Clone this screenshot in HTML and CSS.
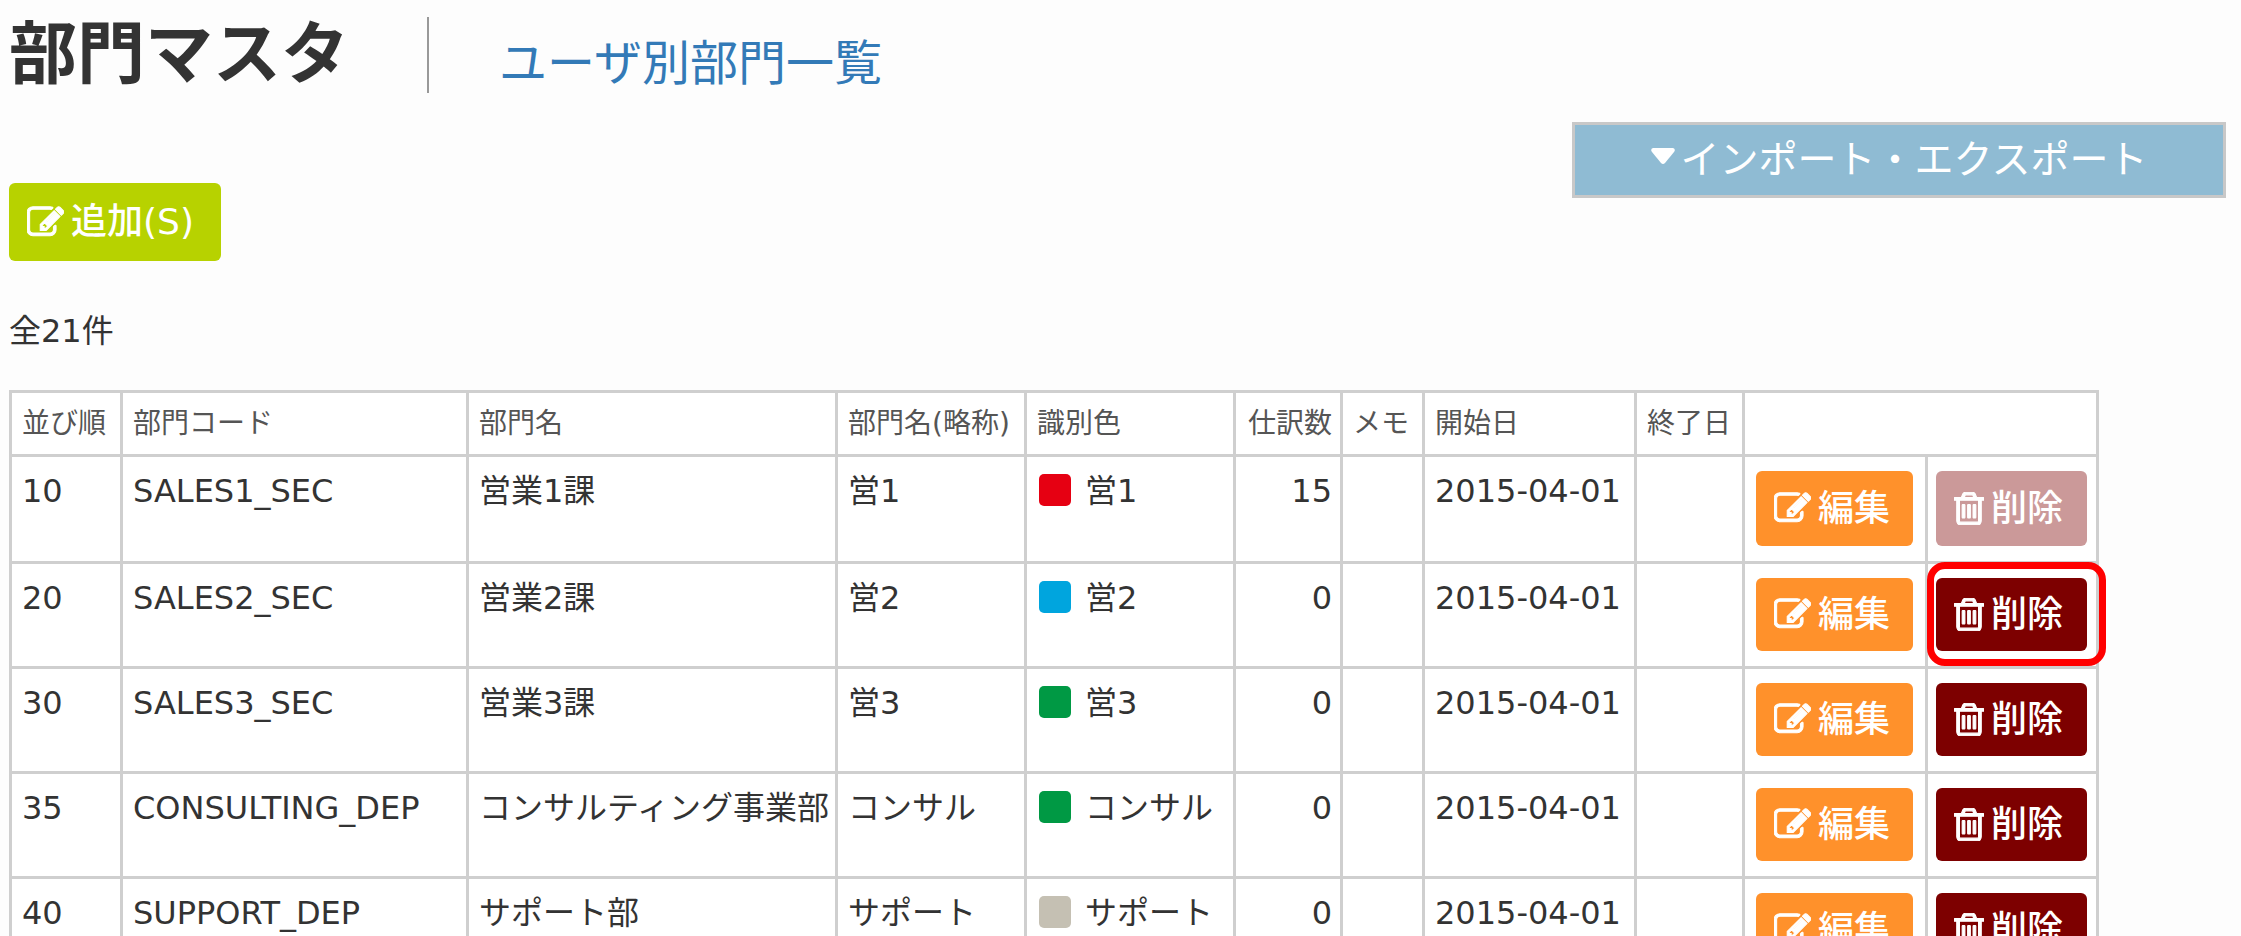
FILE: index.html
```html
<!DOCTYPE html>
<html lang="ja">
<head>
  <meta charset="utf-8">
  <title>部門マスタ</title>
  <link rel="stylesheet" href="styles.css">
</head>
<body>
  <svg class="defs" aria-hidden="true">
    <symbol id="icon-edit" viewBox="0 0 1792 1792">
      <path d="M888 1184l116-116-152-152-116 116v56h96v96h56zm440-720q-16-16-33 1l-350 350q-17 17-1 33t33-1l350-350q17-17 1-33zm80 594v190q0 119-84.5 203.5t-203.5 84.5h-832q-119 0-203.5-84.5t-84.5-203.5v-832q0-119 84.5-203.5t203.5-84.5h832q63 0 117 25 15 7 18 23 3 17-9 29l-49 49q-14 14-32 8-23-6-45-6h-832q-66 0-113 47t-47 113v832q0 66 47 113t113 47h832q66 0 113-47t47-113v-126q0-13 9-22l64-64q15-15 35-7t20 29zm-96-738l288 288-672 672h-288v-288zm444 132l-92 92-288-288 92-92q28-28 68-28t68 28l152 152q28 28 28 68t-28 68z"/>
    </symbol>
    <symbol id="icon-trash" viewBox="192 128 1408 1536">
      <path d="M704 736v576q0 14-9 23t-23 9h-64q-14 0-23-9t-9-23v-576q0-14 9-23t23-9h64q14 0 23 9t9 23zm256 0v576q0 14-9 23t-23 9h-64q-14 0-23-9t-9-23v-576q0-14 9-23t23-9h64q14 0 23 9t9 23zm256 0v576q0 14-9 23t-23 9h-64q-14 0-23-9t-9-23v-576q0-14 9-23t23-9h64q14 0 23 9t9 23zm128 724v-948h-896v948q0 22 7 40.5t14.5 27 10.5 8.5h832q3 0 10.5-8.5t14.5-27 7-40.5zm-672-1076h448l-48-117q-7-9-17-11h-317q-10 2-17 11zm928 32v64q0 14-9 23t-23 9h-96v948q0 83-47 143.5t-113 60.5h-832q-66 0-113-58.5t-47-141.5v-952h-96q-14 0-23-9t-9-23v-64q0-14 9-23t23-9h309l70-167q15-37 54-63t79-26h320q40 0 79 26t54 63l70 167h309q14 0 23 9t9 23z"/>
    </symbol>
  </svg>

  <header class="page-header">
    <h1>部門マスタ</h1>
    <a class="sub-link" href="#">ユーザ別部門一覧</a>
  </header>

  <div class="toolbar">
    <button type="button" class="btn btn-add"><svg class="icon-edit"><use href="#icon-edit"/></svg>追加(S)</button>
    <button type="button" class="import-toggle"><svg class="caret" viewBox="0 0 24 16"><path d="M2 0h20q3 1 1 4L14 15q-2 2-4 0L1 4Q-1 1 2 0z"/></svg>インポート・エクスポート</button>
  </div>

  <p class="count">全21件</p>

  <table class="master">
    <colgroup>
      <col class="col-order">
      <col class="col-code">
      <col class="col-name">
      <col class="col-short">
      <col class="col-color">
      <col class="col-num">
      <col class="col-memo">
      <col class="col-start">
      <col class="col-end">
      <col class="col-edit">
      <col class="col-delete">
    </colgroup>
    <thead>
      <tr>
        <th>並び順</th>
        <th>部門コード</th>
        <th>部門名</th>
        <th>部門名(略称)</th>
        <th>識別色</th>
        <th class="num">仕訳数</th>
        <th>メモ</th>
        <th>開始日</th>
        <th>終了日</th>
        <th colspan="2"></th>
      </tr>
    </thead>
    <tbody>
      <tr>
        <td>10</td>
        <td>SALES1_SEC</td>
        <td>営業1課</td>
        <td>営1</td>
        <td><span class="swatch red"></span>営1</td>
        <td class="num">15</td>
        <td></td>
        <td>2015-04-01</td>
        <td></td>
        <td class="action"><button type="button" class="btn btn-edit"><svg class="icon-edit"><use href="#icon-edit"/></svg>編集</button></td>
        <td class="action"><button type="button" class="btn btn-delete" disabled><svg class="icon-trash"><use href="#icon-trash"/></svg>削除</button></td>
      </tr>
      <tr>
        <td>20</td>
        <td>SALES2_SEC</td>
        <td>営業2課</td>
        <td>営2</td>
        <td><span class="swatch blue"></span>営2</td>
        <td class="num">0</td>
        <td></td>
        <td>2015-04-01</td>
        <td></td>
        <td class="action"><button type="button" class="btn btn-edit"><svg class="icon-edit"><use href="#icon-edit"/></svg>編集</button></td>
        <td class="action"><div class="marked"><button type="button" class="btn btn-delete"><svg class="icon-trash"><use href="#icon-trash"/></svg>削除</button></div></td>
      </tr>
      <tr>
        <td>30</td>
        <td>SALES3_SEC</td>
        <td>営業3課</td>
        <td>営3</td>
        <td><span class="swatch green"></span>営3</td>
        <td class="num">0</td>
        <td></td>
        <td>2015-04-01</td>
        <td></td>
        <td class="action"><button type="button" class="btn btn-edit"><svg class="icon-edit"><use href="#icon-edit"/></svg>編集</button></td>
        <td class="action"><button type="button" class="btn btn-delete"><svg class="icon-trash"><use href="#icon-trash"/></svg>削除</button></td>
      </tr>
      <tr>
        <td>35</td>
        <td>CONSULTING_DEP</td>
        <td>コンサルティング事業部</td>
        <td>コンサル</td>
        <td><span class="swatch green"></span>コンサル</td>
        <td class="num">0</td>
        <td></td>
        <td>2015-04-01</td>
        <td></td>
        <td class="action"><button type="button" class="btn btn-edit"><svg class="icon-edit"><use href="#icon-edit"/></svg>編集</button></td>
        <td class="action"><button type="button" class="btn btn-delete"><svg class="icon-trash"><use href="#icon-trash"/></svg>削除</button></td>
      </tr>
      <tr>
        <td>40</td>
        <td>SUPPORT_DEP</td>
        <td>サポート部</td>
        <td>サポート</td>
        <td><span class="swatch gray"></span>サポート</td>
        <td class="num">0</td>
        <td></td>
        <td>2015-04-01</td>
        <td></td>
        <td class="action"><button type="button" class="btn btn-edit"><svg class="icon-edit"><use href="#icon-edit"/></svg>編集</button></td>
        <td class="action"><button type="button" class="btn btn-delete"><svg class="icon-trash"><use href="#icon-trash"/></svg>削除</button></td>
      </tr>
    </tbody>
  </table>
</body>
</html>
```

FILE: styles.css
```css
* {
  box-sizing: border-box;
}

body {
  margin: 0;
  padding: 0 15px 0 9px;
  height: 100vh;
  overflow: hidden;
  background-color: #fdfdfd;
  color: #333;
  font-family: "DejaVu Sans", "Noto Sans CJK JP", sans-serif;
  font-size: 32px;
  line-height: 40px;
}

.defs {
  display: none;
}

.page-header {
  display: flex;
  align-items: flex-start;
  padding-top: 17px;
}

h1 {
  margin: 0;
  padding-right: 78px;
  border-right: 2px solid #999;
  font-size: 68px;
  line-height: 76px;
  font-weight: bold;
}

.sub-link {
  margin-left: 70px;
  padding-top: 8px;
  color: #337ab7;
  font-size: 48px;
  line-height: 76px;
  text-decoration: none;
}

.toolbar {
  display: flex;
  justify-content: space-between;
  align-items: flex-start;
  margin-top: 21px;
}

.btn {
  display: flex;
  align-items: center;
  height: 73px;
  margin: 0;
  padding: 0 18px;
  gap: 7px;
  border: none;
  border-radius: 6px;
  color: #fff;
  font-family: "DejaVu Sans", "Noto Sans CJK JP", sans-serif;
  font-size: 36px;
  line-height: 44px;
  font-weight: 500;
  white-space: nowrap;
  cursor: pointer;
}

.btn svg {
  fill: #fff;
  stroke: #fff;
  stroke-width: 50px;
  flex: none;
}

.icon-edit {
  width: 37px;
  height: 37px;
}

.icon-trash {
  width: 30px;
  height: 33px;
}

.btn-add {
  width: 212px;
  height: 78px;
  margin-top: 61px;
  background-color: #b7d200;
}

.btn-edit {
  width: 157px;
  background-color: #ff912b;
}

.btn-delete {
  width: 151px;
  background-color: #7d0000;
}

.btn-delete:disabled {
  background-color: #cb9999;
  cursor: default;
}

.import-toggle {
  display: flex;
  align-items: center;
  justify-content: center;
  min-width: 654px;
  height: 76px;
  padding: 0 0 8px;
  gap: 6px;
  border: 3px solid #c8c8c8;
  background-color: #8fbbd3;
  color: #fff;
  font-family: "Noto Sans CJK JP", sans-serif;
  font-size: 39px;
  line-height: 48px;
  cursor: pointer;
}

.caret {
  width: 24px;
  height: 16px;
  fill: #fff;
}

.count {
  margin: 50px 0 39px;
}

.master {
  width: 2090px;
  table-layout: fixed;
  border-collapse: collapse;
  background-color: #fff;
}

.col-order { width: 111px; }
.col-code { width: 346px; }
.col-name { width: 369px; }
.col-short { width: 189px; }
.col-color { width: 209px; }
.col-num { width: 107px; }
.col-memo { width: 82px; }
.col-start { width: 212px; }
.col-end { width: 108px; }
.col-edit { width: 183px; }
.col-delete { width: 171px; }

th, td {
  border: 3px solid #cfcfcf;
  text-align: left;
  vertical-align: top;
  white-space: nowrap;
}

th {
  height: 64px;
  padding: 11px 8px 0 10px;
  color: #555;
  font-size: 28px;
  font-weight: normal;
}

td {
  padding: 14px 8px 0 10px;
}

th.num, td.num {
  text-align: right;
}

td.action {
  padding: 14px 9px 15px 11px;
}

td.action:last-child {
  padding-left: 8px;
}

/* first row stands a little taller than the rest */
tbody tr:first-child .btn {
  height: 75px;
}

.swatch {
  display: inline-block;
  width: 32px;
  height: 32px;
  margin-left: 2px;
  margin-right: 14px;
  border-radius: 5px;
  vertical-align: -4px;
}

.red { background-color: #e60012; }
.blue { background-color: #00a5de; }
.green { background-color: #009944; }
.gray { background-color: #c5c0b3; }

.marked {
  position: relative;
}

.marked::after {
  content: "";
  position: absolute;
  top: -16px;
  right: -19px;
  bottom: -15px;
  left: -9px;
  border: 7px solid #f00;
  border-radius: 18px;
  pointer-events: none;
}
```
